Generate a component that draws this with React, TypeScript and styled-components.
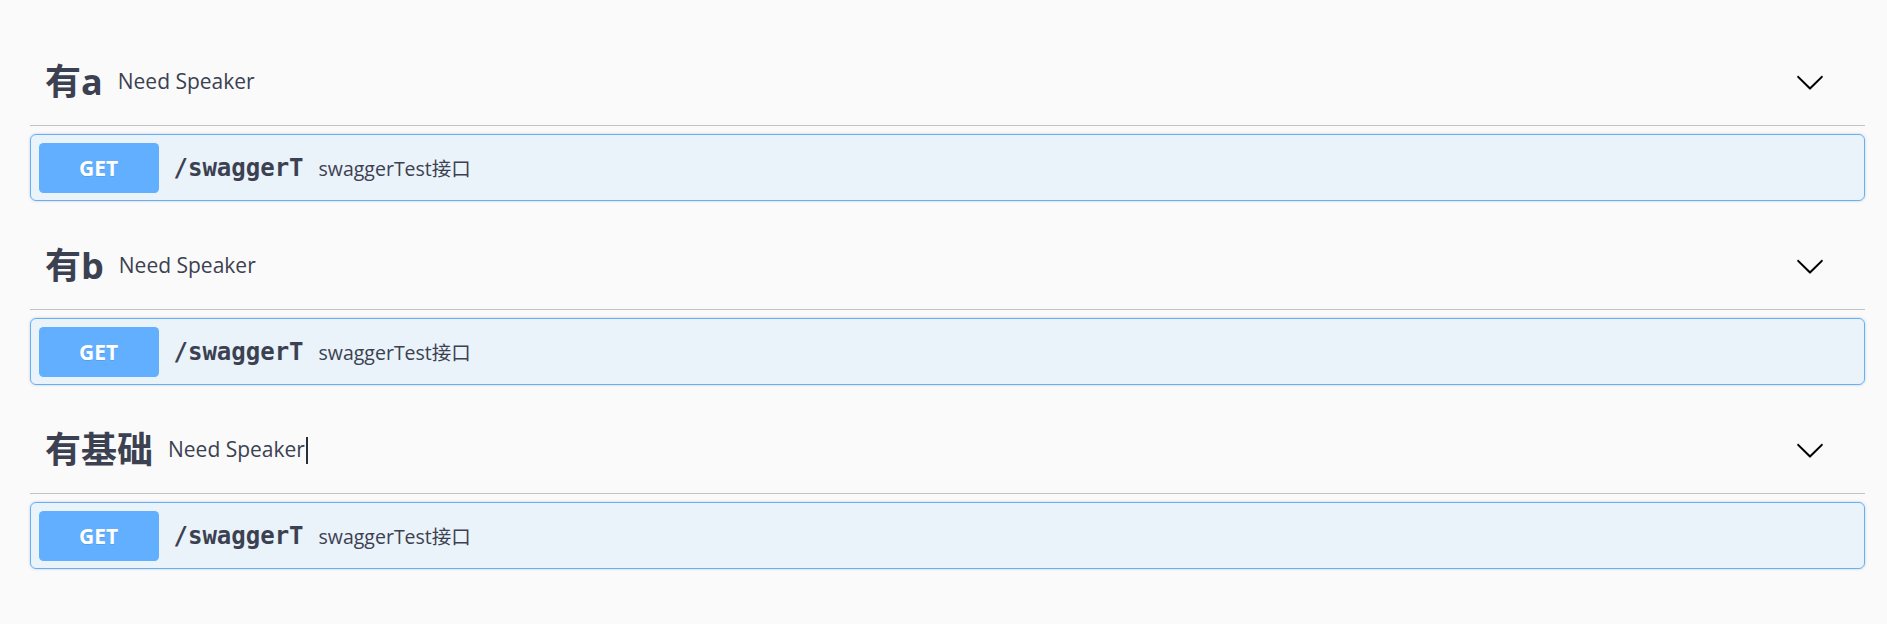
import React from "react";
import styled, { createGlobalStyle } from "styled-components";

const GlobalStyle = createGlobalStyle`
  html, body {
    margin: 0;
    padding: 0;
    background: #fafafa;
  }
  body {
    font-family: "Open Sans", "Noto Sans CJK SC", sans-serif;
    color: #3b4151;
  }
`;

const Wrapper = styled.div`
  padding: 39px 22px 0 30px;
  display: flex;
  flex-direction: column;
`;

const TagSection = styled.section`
  display: flex;
  flex-direction: column;
`;

const TagHeader = styled.h4`
  display: flex;
  align-items: center;
  box-sizing: border-box;
  margin: 0 0 8px;
  padding: 15px 30px 15px 15px;
  min-height: 87px;
  border-bottom: 1px solid rgba(59, 65, 81, 0.3);
  font-family: "Open Sans", "Noto Sans CJK SC", sans-serif;
  font-size: 36px;
  font-weight: 700;
  color: #3b4151;
  line-height: 1.2;
`;

const TagName = styled.span`
  white-space: nowrap;
`;

const TagDesc = styled.small`
  flex: 1;
  display: flex;
  align-items: center;
  padding: 0 15px;
  font-family: "Open Sans", sans-serif;
  font-size: 21px;
  font-weight: 400;
  color: #3b4151;
`;

const Caret = styled.span`
  display: inline-block;
  width: 2px;
  height: 27px;
  background: #2b2f3a;
  margin-left: 1px;
`;

const ExpandButton = styled.button`
  display: flex;
  align-items: center;
  justify-content: center;
  background: none;
  border: none;
  padding: 0;
  margin-right: 10px;
  cursor: pointer;
  svg {
    width: 30px;
    height: 30px;
    display: block;
  }
`;

const Opblock = styled.div`
  box-sizing: border-box;
  margin: 0 0 22px;
  border: 1px solid #61affe;
  border-radius: 6px;
  background: rgba(97, 175, 254, 0.1);
  box-shadow: 0 0 3px rgba(0, 0, 0, 0.19);
`;

const Summary = styled.div`
  display: flex;
  align-items: center;
  padding: 7.5px;
`;

const Method = styled.span`
  display: flex;
  align-items: center;
  justify-content: center;
  min-width: 120px;
  height: 50px;
  border-radius: 4.5px;
  background: #61affe;
  color: #fff;
  font-family: "Open Sans", sans-serif;
  font-size: 21px;
  font-weight: 700;
  text-shadow: 0 1px 0 rgba(0, 0, 0, 0.1);
`;

const Path = styled.span`
  padding: 0 15px;
  font-family: "DejaVu Sans Mono", monospace;
  font-size: 24px;
  font-weight: 700;
  color: #3b4151;
`;

const Description = styled.div`
  font-family: "Open Sans", "Noto Sans CJK SC", sans-serif;
  font-size: 19.5px;
  color: #3b4151;
`;

const Arrow = () => (
  <svg viewBox="0 0 20 20" aria-hidden="true">
    <path
      fill="#000"
      d="M17.418 6.109c.272-.268.709-.268.979 0s.271.701 0 .969l-7.908 7.83c-.27.268-.707.268-.979 0l-7.908-7.83c-.27-.268-.27-.701 0-.969.271-.268.709-.268.979 0L10 13.25l7.418-7.141z"
    />
  </svg>
);

type Tag = { name: string; caret?: boolean };

const tags: Tag[] = [{ name: "有a" }, { name: "有b" }, { name: "有基础", caret: true }];

export default function App() {
  return (
    <>
      <GlobalStyle />
      <Wrapper>
        {tags.map((t) => (
          <TagSection key={t.name}>
            <TagHeader>
              <TagName>{t.name}</TagName>
              <TagDesc>
                Need Speaker
                {t.caret && <Caret />}
              </TagDesc>
              <ExpandButton aria-label="collapse">
                <Arrow />
              </ExpandButton>
            </TagHeader>
            <Opblock>
              <Summary>
                <Method>GET</Method>
                <Path>/swaggerT</Path>
                <Description>swaggerTest接口</Description>
              </Summary>
            </Opblock>
          </TagSection>
        ))}
      </Wrapper>
    </>
  );
}
